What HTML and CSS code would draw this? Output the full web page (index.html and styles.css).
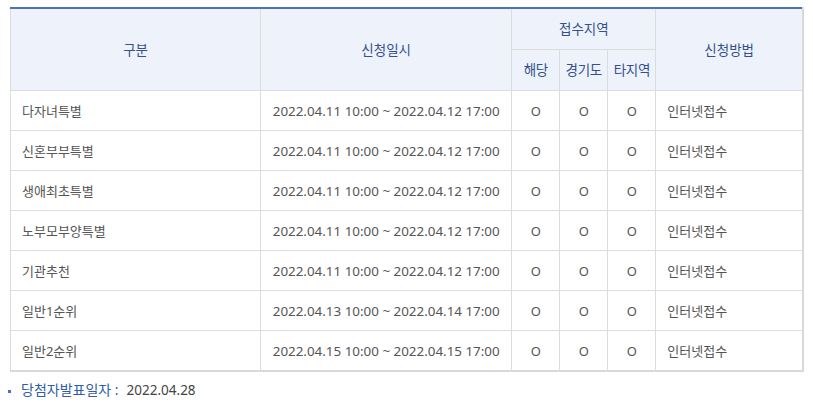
FILE: index.html
```html
<!DOCTYPE html>
<html lang="ko">
<head>
  <meta charset="UTF-8">
  <title>청약일정</title>
  <link rel="stylesheet" href="styles.css">
</head>
<body>
  <table class="schedule">
    <colgroup>
      <col class="c-type">
      <col class="c-date">
      <col class="c-area">
      <col class="c-area">
      <col class="c-area">
      <col class="c-method">
    </colgroup>
    <thead>
      <tr>
        <th rowspan="2">구분</th>
        <th rowspan="2">신청일시</th>
        <th colspan="3" class="group">접수지역</th>
        <th rowspan="2">신청방법</th>
      </tr>
      <tr>
        <th class="sub">해당</th>
        <th class="sub">경기도</th>
        <th class="sub">타지역</th>
      </tr>
    </thead>
    <tbody>
      <tr>
        <td class="left">다자녀특별</td>
        <td class="date">2022.04.11 10:00 ~ 2022.04.12 17:00</td>
        <td>O</td><td>O</td><td>O</td>
        <td class="left">인터넷접수</td>
      </tr>
      <tr>
        <td class="left">신혼부부특별</td>
        <td class="date">2022.04.11 10:00 ~ 2022.04.12 17:00</td>
        <td>O</td><td>O</td><td>O</td>
        <td class="left">인터넷접수</td>
      </tr>
      <tr>
        <td class="left">생애최초특별</td>
        <td class="date">2022.04.11 10:00 ~ 2022.04.12 17:00</td>
        <td>O</td><td>O</td><td>O</td>
        <td class="left">인터넷접수</td>
      </tr>
      <tr>
        <td class="left">노부모부양특별</td>
        <td class="date">2022.04.11 10:00 ~ 2022.04.12 17:00</td>
        <td>O</td><td>O</td><td>O</td>
        <td class="left">인터넷접수</td>
      </tr>
      <tr>
        <td class="left">기관추천</td>
        <td class="date">2022.04.11 10:00 ~ 2022.04.12 17:00</td>
        <td>O</td><td>O</td><td>O</td>
        <td class="left">인터넷접수</td>
      </tr>
      <tr>
        <td class="left">일반1순위</td>
        <td class="date">2022.04.13 10:00 ~ 2022.04.14 17:00</td>
        <td>O</td><td>O</td><td>O</td>
        <td class="left">인터넷접수</td>
      </tr>
      <tr>
        <td class="left">일반2순위</td>
        <td class="date">2022.04.15 10:00 ~ 2022.04.15 17:00</td>
        <td>O</td><td>O</td><td>O</td>
        <td class="left">인터넷접수</td>
      </tr>
    </tbody>
  </table>

  <p class="notice"><span class="label">당첨자발표일자 :</span>2022.04.28</p>
</body>
</html>
```

FILE: styles.css
```css
body {
  margin: 0;
  padding: 7px 9px 0 10px;
  font-family: "Noto Sans", "Noto Sans CJK KR", sans-serif;
  font-size: 13px;
  color: #555;
  background: #fff;
}
.schedule {
  width: 794px;
  border-collapse: collapse;
  table-layout: fixed;
  border-top: 2px solid #4b72b8;
  border-right: 2px solid #d9d9d9;
  border-bottom: 2px solid #d9d9d9;
  border-left: 1px solid #dcdcdc;
}
.c-type { width: 250px; }
.c-date { width: 251px; }
.c-area { width: 48px; }
.c-method { width: 147px; }
th, td {
  border: 1px solid #dcdcdc;
  padding: 0;
  text-align: center;
  line-height: 18px;
}
th {
  background: #eef3fb;
  color: #34508f;
  font-weight: normal;
  font-size: 13.5px;
  height: 40px;
}
th.sub {
  letter-spacing: -0.3px;
}
td {
  height: 39px;
  background: #fff;
}
td.date {
  font-size: 13.4px;
}
td.left {
  text-align: left;
  padding-left: 11px;
}
.notice {
  position: relative;
  margin: 8px 0 0;
  padding-left: 11px;
  font-size: 13.5px;
  color: #444;
  line-height: 20px;
}
.notice::before {
  content: "";
  position: absolute;
  left: -2px;
  top: 10px;
  width: 3px;
  height: 3px;
  background: #4b72b8;
}
.notice .label {
  color: #2f5ea6;
  font-size: 14px;
  margin-right: 8px;
}
```
